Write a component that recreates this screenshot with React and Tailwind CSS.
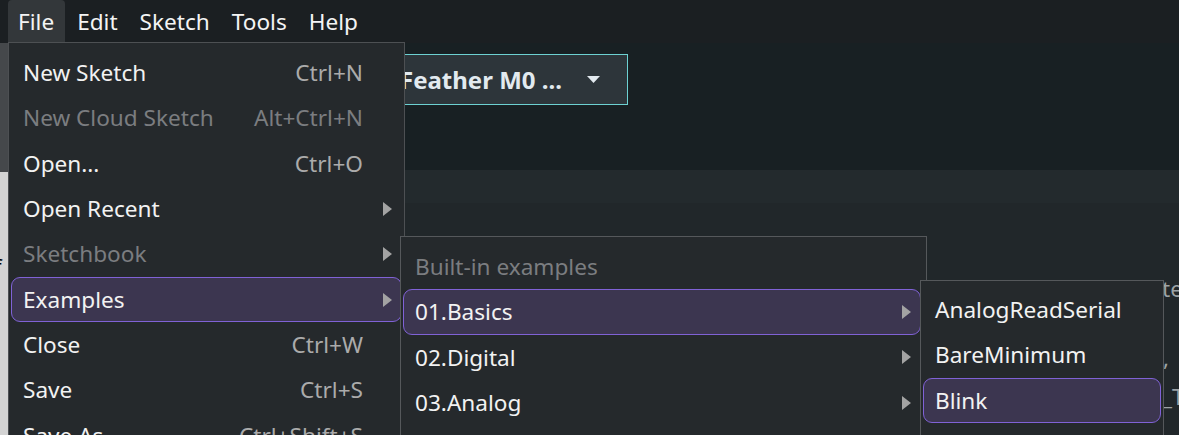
const font = { fontFamily: '"Noto Sans", "Open Sans", sans-serif' };

const Arrow = () => (
  <svg width="9" height="14" viewBox="0 0 9 14" className="shrink-0">
    <polygon points="0,0 9,7 0,14" fill="#a3a3a3" />
  </svg>
);

const Item = ({ label, shortcut, sub, disabled, active }) => (
  <div className="h-[45.4px] flex items-stretch px-[2px]">
    <div
      className={
        "flex-1 flex items-center pl-[11px] pr-[9px] rounded-[9px] border " +
        (active ? "bg-[#3c3650] border-[#8062d6]" : "border-transparent")
      }
    >
      <span className={"flex-1 whitespace-nowrap " + (disabled ? "text-[#7b7d80]" : "text-[#f2f2f2]")}>{label}</span>
      {shortcut && (
        <span className={"whitespace-nowrap mr-[29px] " + (disabled ? "text-[#7b7d80]" : "text-[#ababab]")}>
          {shortcut}
        </span>
      )}
      {sub && <Arrow />}
    </div>
  </div>
);

const fileItems = [
  { label: "New Sketch", shortcut: "Ctrl+N" },
  { label: "New Cloud Sketch", shortcut: "Alt+Ctrl+N", disabled: true },
  { label: "Open...", shortcut: "Ctrl+O" },
  { label: "Open Recent", sub: true },
  { label: "Sketchbook", sub: true, disabled: true },
  { label: "Examples", sub: true, active: true },
  { label: "Close", shortcut: "Ctrl+W" },
  { label: "Save", shortcut: "Ctrl+S" },
  { label: "Save As...", shortcut: "Ctrl+Shift+S" },
];

const exampleItems = [
  { label: "Built-in examples", disabled: true },
  { label: "01.Basics", sub: true, active: true },
  { label: "02.Digital", sub: true },
  { label: "03.Analog", sub: true },
  { label: "04.Communication", sub: true },
];

const basicItems = [
  { label: "AnalogReadSerial" },
  { label: "BareMinimum" },
  { label: "Blink", active: true },
  { label: "DigitalReadSerial" },
];

export default function App() {
  return (
    <div className="relative w-[1179px] h-[435px] overflow-hidden bg-[#21272a] text-[22.6px]" style={font}>
      {/* menubar */}
      <div className="h-[43px] bg-[#1b1f22] flex items-stretch pl-[8px] text-[#f4f4f4]">
        <div className="pl-[10px] pr-[11px] flex items-center bg-[#33373a] rounded-t-[4px]">File</div>
        <div className="pl-[12px] pr-[11px] flex items-center">Edit</div>
        <div className="px-[11px] flex items-center">Sketch</div>
        <div className="px-[11px] flex items-center">Tools</div>
        <div className="px-[11px] flex items-center">Help</div>
      </div>

      <div className="flex h-[392px]">
        {/* window behind, left edge */}
        <div className="w-[8px] flex flex-col shrink-0">
          <div className="h-[129px] bg-[#45484b]" />
          <div className="flex-1 bg-[#d3d3d3] text-black overflow-hidden leading-none">
            <div className="mt-[83px] -ml-[6px] text-[22px]">f</div>
          </div>
        </div>

        <div className="flex-1 flex flex-col">
          {/* toolbar */}
          <div className="h-[127px] bg-[#182023] pt-[11px]">
            <div className="ml-[172px] w-[448px] h-[51px] flex items-center justify-end pr-[27px] bg-[#2d353a] border border-[#6dd1d2] text-[#e2eaef] font-bold text-[24px]">
              <span className="whitespace-nowrap">Adafruit Feather M0 ...</span>
              <svg width="13" height="8" viewBox="0 0 13 8" className="ml-[25px]">
                <polygon points="0,0 13,0 6.5,7" fill="#e2eaef" />
              </svg>
            </div>
          </div>
          <div className="h-[33px] bg-[#232a2d]" />
          {/* editor */}
          <div className="flex-1 bg-[#21272a] text-[#9da3a6] relative">
            <div className="ml-[1154px] mt-[75px] leading-none">te</div>
            <div className="ml-[1155px] mt-[46px] leading-none">,</div>
            <div className="ml-[1154px] mt-[17px] leading-none">_T</div>
          </div>
        </div>
      </div>

      {/* File menu */}
      <div className="absolute left-[8px] top-[42px] w-[397px] h-[420px] bg-[#25292c] border border-[#4d5053] pt-[7px]">
        {fileItems.map((it) => (
          <Item key={it.label} {...it} />
        ))}
      </div>

      {/* Examples submenu */}
      <div className="absolute left-[400px] top-[236px] w-[527px] h-[260px] bg-[#25292c] border border-[#55585b] pt-[7px] pr-[3px]">
        {exampleItems.map((it) => (
          <Item key={it.label} {...it} />
        ))}
      </div>

      {/* Basics submenu */}
      <div className="absolute left-[920px] top-[280px] w-[244px] h-[220px] bg-[#25292c] border border-[#55585b] pt-[6px]">
        {basicItems.map((it) => (
          <Item key={it.label} {...it} />
        ))}
      </div>
    </div>
  );
}
